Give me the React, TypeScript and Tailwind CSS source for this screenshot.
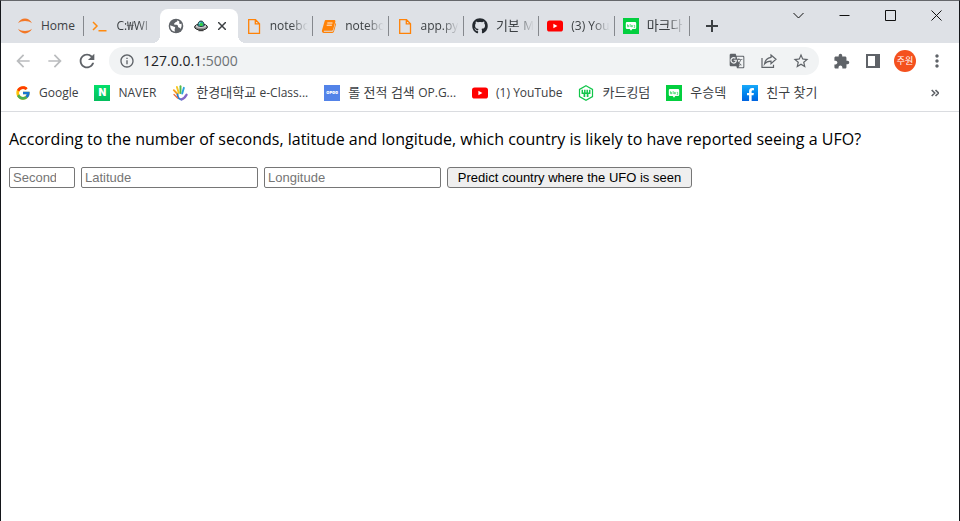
import React from "react";
import {
  MdArrowBack,
  MdArrowForward,
  MdExtension,
  MdGTranslate,
  MdInfoOutline,
  MdMoreVert,
  MdRefresh,
  MdStarBorder,
} from "react-icons/md";
import { FaFacebookF, FaGithub } from "react-icons/fa";
import { FcGoogle } from "react-icons/fc";

const uiFont = "font-['Open_Sans','Noto_Sans_CJK_KR',sans-serif]";

function JupyterIcon() {
  return (
    <svg viewBox="0 0 16 16" className="size-4" fill="#f37726">
      <path d="M1 5.2C2.4 2.4 5 .6 8 .6s5.600 1.800 7 4.600C13.200 3.800 10.700 3 8 3s-5.200.800-7 2.200z" />
      <path d="M1 10.800c1.400 2.800 4 4.600 7 4.600s5.600-1.800 7-4.600c-1.800 1.400-4.300 2.200-7 2.200s-5.200-.800-7-2.200z" />
    </svg>
  );
}

function TerminalIcon() {
  return (
    <svg viewBox="0 0 16 16" className="size-4" fill="none" stroke="#ff8a0f" strokeWidth="1.500">
      <path d="M1 4l4 4-4 4M6.500 12.800H14.500" />
    </svg>
  );
}

function FileIcon() {
  return (
    <svg viewBox="0 0 16 16" className="size-4" fill="none" stroke="#ff8207" strokeWidth="1.300">
      <path d="M2.700 1.700h6.800l4 4v9.600H2.700zM9.300 1.700v4.200h4.200" />
    </svg>
  );
}

function BookIcon() {
  return (
    <svg viewBox="0 0 16 16" className="size-4" fill="#ff8207">
      <path d="M4.900 2h8.300c.900 0 1.400.700 1.200 1.500l-2.300 8.200c-.200.700-.700 1.100-1.400 1.100H3.300c-.500 0-.7.600-.2.900h8.300c.500 0 .8-.2.900-.7L14.500 5c.600.300.700.9.500 1.500l-2 7c-.2.800-.9 1.400-1.700 1.400H2.800c-1.400 0-2.300-1.300-1.800-2.600L3.600 3.200C3.800 2.500 4.200 2 4.900 2z" />
      <path d="M6.300 5h5.200M5.700 7.200h5.200" stroke="#fff" strokeWidth=".9" />
    </svg>
  );
}

function GlobeIcon() {
  return (
    <svg viewBox="0 0 16 16" className="size-4">
      <circle cx="8" cy="8" r="7.300" fill="#5f6368" />
      <path
        d="M9.200 2.300c.300 1-.2 1.500-1.200 1.700-.9.200-.7 1-1.500 1.300-.8.300-.6 1.400.3 1.500 1.200.1 2.500-.2 3 .7.400.9 0 1.700 1.100 1.900.9.200 1.300.8 1.500 1.600 1.300-1.700 1.600-3.600.9-5.400-.7.500-1.500.4-1.900-.2-.5-.8.400-1.400-.3-2.200z"
        fill="#fff"
      />
      <path d="M2.200 7.300c1.600.7 2.600 1.100 4 1.400 1 .3 1.300.9.700 1.700-.6.700 0 1.300-.1 3.300C4 13.200 2 10.700 2.200 7.300z" fill="#fff" />
    </svg>
  );
}

function YoutubeIcon() {
  return (
    <svg viewBox="0 0 16 16" className="size-4">
      <rect y="2.500" width="16" height="11" rx="2.600" fill="#f00" />
      <path d="M6.400 5.700v4.600l4-2.300z" fill="#fff" />
    </svg>
  );
}

function BlogIcon() {
  return (
    <svg viewBox="0 0 16 16" className="size-4">
      <rect width="16" height="16" fill="#03cf3f" />
      <path d="M4 4h8a1.200 1.200 0 011.200 1.200v4.600A1.200 1.200 0 0112 11H9.300L8 12.700 6.700 11H4a1.200 1.200 0 01-1.200-1.200V5.200A1.200 1.200 0 014 4z" fill="#fff" />
      <path d="M4.600 6.200v2.600h1V7.500h-1M7.200 6v3M8.400 7.400h1v1.400h-1zM10.700 7.400h1v2.200h-1" stroke="#03cf3f" strokeWidth=".6" fill="none" />
    </svg>
  );
}

function UfoIcon() {
  return (
    <svg viewBox="0 0 14 14" className="size-3.5">
      <path d="M4.500 11.200h5v1h-5z" fill="#333" />
      <ellipse cx="7" cy="8" rx="6.400" ry="3.100" fill="#8d8d8d" stroke="#222" />
      <ellipse cx="7" cy="7.200" rx="5.200" ry="1.700" fill="#d4d4d4" />
      <path d="M3.800 6.800C3.800 3.700 5 2 7 2s3.200 1.700 3.200 4.800c-1.800 1-4.600 1-6.400 0z" fill="#2aa7a0" stroke="#263238" strokeWidth=".9" />
      <circle cx="7.300" cy="5.400" r="1.500" fill="#3ccf3c" />
      <path d="M5.200 4.800l1-1.400" stroke="#bdf3ff" strokeWidth=".9" />
    </svg>
  );
}

function HandIcon() {
  return (
    <svg viewBox="0 0 16 16" className="size-4" fill="none" strokeLinecap="round" strokeWidth="1.900">
      <path d="M5.500 9L1.800 5.200" stroke="#f5a01f" />
      <path d="M6.800 8L4.900 2" stroke="#f7c623" />
      <path d="M8.500 8V1.300" stroke="#58b947" />
      <path d="M10.200 8.500l1.700-5.700" stroke="#29a3dc" />
      <path d="M5.500 9.500c.2 3 1.800 4.800 4 5" stroke="#2c7fd0" />
      <path d="M2 9.500l3.500 3.500" stroke="#ef6a3a" strokeWidth="1.300" />
      <path d="M9.500 14.300c2.400-.3 3.700-2.300 5-4.500" stroke="#8467c7" strokeWidth="2.300" />
    </svg>
  );
}

function CardIcon() {
  return (
    <svg viewBox="0 0 16 16" className="size-4" fill="none" stroke="#12c64a">
      <path d="M8 .8l6.500 3.600v7.200L8 15.200l-6.500-3.600V4.400z" strokeWidth="1.200" />
      <path d="M4.300 4.800v3.400h7.400V4.800M6.800 4.800v3.400M9.200 4.800v3.400" strokeWidth="1.500" />
      <path d="M6.400 9v3M9.600 9v3" strokeWidth="1.700" />
    </svg>
  );
}

function NaverIcon() {
  return (
    <span className="flex size-4 items-center justify-center bg-linear-to-b from-[#03e06a] to-[#04bd5e] font-['Inter',sans-serif] text-[10px] font-black text-white">
      N
    </span>
  );
}

function OpggIcon() {
  return (
    <span className="flex size-4 items-center justify-center bg-[#5383e8] font-['Inter',sans-serif] text-[4px] font-black text-white">
      OPGG
    </span>
  );
}

function FacebookIcon() {
  return (
    <span className="flex size-4 items-end justify-center bg-linear-to-b from-[#19a9fa] to-[#0163e0] text-white">
      <FaFacebookF className="size-[13px]" />
    </span>
  );
}

type Item = { icon: React.ReactNode; label: string };
type TabItem = Item & { active?: boolean; fade?: boolean; divider?: boolean };

const tabs: TabItem[] = [
  { icon: <JupyterIcon />, label: "Home", divider: true },
  { icon: <TerminalIcon />, label: "C:₩WI", fade: true },
  { icon: <GlobeIcon />, label: "UFO", active: true },
  { icon: <FileIcon />, label: "notebo", fade: true, divider: true },
  { icon: <BookIcon />, label: "notebo", fade: true, divider: true },
  { icon: <FileIcon />, label: "app.py", fade: true, divider: true },
  { icon: <FaGithub className="size-4 text-[#24292f]" />, label: "기본 M", fade: true, divider: true },
  { icon: <YoutubeIcon />, label: "(3) You", fade: true, divider: true },
  { icon: <BlogIcon />, label: "마크다", fade: true, divider: true },
];

const bookmarks: Item[] = [
  { icon: <FcGoogle className="size-4" />, label: "Google" },
  { icon: <NaverIcon />, label: "NAVER" },
  { icon: <HandIcon />, label: "한경대학교 e-Class..." },
  { icon: <OpggIcon />, label: "롤 전적 검색 OP.G..." },
  { icon: <YoutubeIcon />, label: "(1) YouTube" },
  { icon: <CardIcon />, label: "카드킹덤" },
  { icon: <BlogIcon />, label: "우승덱" },
  { icon: <FacebookIcon />, label: "친구 찾기" },
];

/** Sets Hangul runs one size larger than the Latin text around them. */
function Label({ text }: { text: string }) {
  const runs = text.split(/([가-힣][가-힣 ]*)/).filter(Boolean);
  return (
    <span className="whitespace-pre">
      {runs.map((run, i) => (
        <span key={i} className={/[가-힣]/.test(run) ? "text-[13px]" : "text-xs"}>
          {run}
        </span>
      ))}
    </span>
  );
}

function Tab({ icon, label, active, fade, divider }: TabItem) {
  if (active) {
    return (
      <div className="relative h-[34px] w-[78px] shrink-0 rounded-t-lg bg-white before:absolute before:bottom-0 before:-left-2 before:size-2 before:bg-[radial-gradient(circle_at_0%_0%,#dee1e6_8px,white_8px)] after:absolute after:-right-2 after:bottom-0 after:size-2 after:bg-[radial-gradient(circle_at_100%_0%,#dee1e6_8px,white_8px)]">
        <div className="flex h-full items-center pl-2">
          <span className="shrink-0">{icon}</span>
          <span className="ml-2.5 shrink-0">
            <UfoIcon />
          </span>
          <button type="button" aria-label="Close tab" className="ml-1.5 flex size-4 shrink-0 items-center justify-center">
            <svg viewBox="0 0 8 8" className="size-2" stroke="#3c4043" strokeWidth="1.500">
              <path d="M0 0l8 8M8 0L0 8" />
            </svg>
          </button>
        </div>
      </div>
    );
  }
  return (
    <div className="flex h-[34px] min-w-0 flex-1 items-center">
      <button type="button" className="flex min-w-0 flex-1 items-center gap-2 pl-2 text-left">
        <span className="shrink-0">{icon}</span>
        <span className={`min-w-0 flex-1 whitespace-nowrap ${fade ? "mask-r-from-50% mask-r-to-90%" : ""}`}>
          <Label text={label} />
        </span>
      </button>
      {divider && <span className="h-5 w-px bg-[#85888d]" />}
    </div>
  );
}

function IconButton({ label, children }: { label: string; children: React.ReactNode }) {
  return (
    <button type="button" aria-label={label} className="flex size-7 shrink-0 items-center justify-center text-[#5f6368]">
      {children}
    </button>
  );
}

function WindowButton({ label, path }: { label: string; path: string }) {
  return (
    <button type="button" aria-label={label} className="flex h-7 w-[46px] items-center justify-center">
      <svg viewBox="0 0 11 11" className="size-[11px]" fill="none" stroke="#111">
        <path d={path} />
      </svg>
    </button>
  );
}

export default function App() {
  return (
    <div className={`flex min-h-screen flex-col border-x border-t border-x-[#14161a] border-t-[#65676b] bg-white text-xs text-[#3c4043] ${uiFont}`}>
      <header>
        <div className="flex h-[42px] items-end bg-[#dee1e6] pl-2">
          <nav aria-label="Tabs" className="flex max-w-[681px] min-w-0 flex-1">
            {tabs.map((tab, i) => (
              <Tab key={i} {...tab} />
            ))}
          </nav>
          <button type="button" aria-label="New tab" className="ml-2 flex h-[34px] w-7 items-center justify-center">
            <svg viewBox="0 0 12 12" className="size-3" stroke="#3c4043" strokeWidth="2">
              <path d="M6 0v12M0 6h12" />
            </svg>
          </button>
          <div className="ml-auto flex self-start">
            <WindowButton label="Search tabs" path="M.5 3l5 5 5-5" />
            <WindowButton label="Minimize" path="M.5 5.500h10" />
            <WindowButton label="Maximize" path="M.5.5h10v10H.5z" />
            <WindowButton label="Close" path="M.5.5l10 10M10.500.5l-10 10" />
          </div>
        </div>

        <div className="flex h-9 items-center gap-1 px-2">
          <IconButton label="Back">
            <MdArrowBack className="size-5 text-[#babcbe]" />
          </IconButton>
          <IconButton label="Forward">
            <MdArrowForward className="size-5 text-[#babcbe]" />
          </IconButton>
          <IconButton label="Reload">
            <MdRefresh className="size-[22px]" />
          </IconButton>
          <div className="mx-1 flex h-7 min-w-0 flex-1 items-center gap-1 rounded-full bg-[#f1f3f4] pr-1 pl-2.5">
            <MdInfoOutline className="size-4 shrink-0 text-[#5f6368]" />
            <div className="ml-1 min-w-0 flex-1 text-sm text-[#6d7175]">
              <span className="text-[#202124]">127.0.0.1</span>:5000
            </div>
            <IconButton label="Translate">
              <MdGTranslate className="size-4" />
            </IconButton>
            <IconButton label="Share">
              <svg viewBox="0 0 16 16" className="size-4" fill="none" stroke="currentColor" strokeWidth="1.200">
                <path d="M1 5v9.300h11.500v-2.500" />
                <path d="M10 2l5 4.300-5 4.300V8.200c-3 0-5 .8-6.500 2.800C4 7.300 6.300 4.900 10 4.400z" />
              </svg>
            </IconButton>
            <IconButton label="Bookmark">
              <MdStarBorder className="size-[18px]" />
            </IconButton>
          </div>
          <IconButton label="Extensions">
            <MdExtension className="size-[17px]" />
          </IconButton>
          <IconButton label="Side panel">
            <svg viewBox="0 0 14 14" className="size-3.5">
              <path d="M1 1h12v12H1z" fill="none" stroke="currentColor" strokeWidth="2" />
              <path d="M9 1h4v12H9z" fill="currentColor" />
            </svg>
          </IconButton>
          <IconButton label="Profile">
            <span className="flex size-[22px] items-center justify-center rounded-full bg-[#f4511e] text-[9px] text-white">주원</span>
          </IconButton>
          <IconButton label="Menu">
            <MdMoreVert className="size-5" />
          </IconButton>
        </div>

        <div className="flex h-[33px] items-center border-b border-[#dadce0] pr-3 pb-1 pl-3.5">
          <nav aria-label="Bookmarks" className="flex min-w-0 flex-1 gap-4">
            {bookmarks.map((b) => (
              <a key={b.label} href="#" className="flex h-5 items-center gap-2">
                {b.icon}
                <Label text={b.label} />
              </a>
            ))}
          </nav>
          <button type="button" aria-label="More bookmarks" className="flex h-5 w-6 items-center justify-center">
            <svg viewBox="0 0 8 8" className="size-2" fill="none" stroke="#5f6368" strokeWidth="1.600">
              <path d="M.7 1l3 3-3 3M4.500 1l3 3-3 3" />
            </svg>
          </button>
        </div>
      </header>

      <main className="px-2 pt-[15px] text-black">
        <p className="text-base">
          According to the number of seconds, latitude and longitude, which country is likely to have reported seeing a UFO?
        </p>
        <form
          className="mt-4 flex flex-wrap gap-1.5 font-['Liberation_Sans',Arial,sans-serif] text-[13px]"
          onSubmit={(e) => e.preventDefault()}
        >
          <input type="number" name="seconds" aria-label="Seconds" placeholder="Seconds" className="h-[21px] w-[66px] rounded-xs border border-[#767676] px-[3px] placeholder:text-[#757575]" />
          <input type="text" name="latitude" aria-label="Latitude" placeholder="Latitude" className="h-[21px] w-[177px] rounded-xs border border-[#767676] px-[3px] placeholder:text-[#757575]" />
          <input type="text" name="longitude" aria-label="Longitude" placeholder="Longitude" className="h-[21px] w-[177px] rounded-xs border border-[#767676] px-[3px] placeholder:text-[#757575]" />
          <button type="submit" className="flex h-[21px] w-[245px] items-center justify-center rounded-[3px] border border-[#767676] bg-[#efefef]">
            Predict country where the UFO is seen
          </button>
        </form>
      </main>
    </div>
  );
}
